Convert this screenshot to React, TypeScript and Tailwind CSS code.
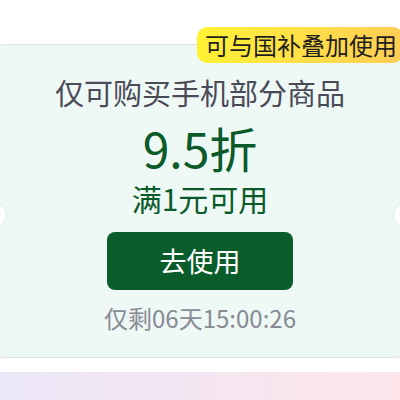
const font = { fontFamily: '"Noto Sans CJK SC", "Noto Sans", sans-serif' };

const App = () => {
  return (
    <div className="w-[400px] h-[400px] overflow-hidden bg-white relative" style={font}>
      <div className="pt-[44px]">
        <div className="relative -mx-[10px] w-[420px] rounded-[14px] border border-[#dde7e2] bg-[#eef8f4]">
          <div className="absolute -top-[18px] right-[6px] h-[36px] rounded-[10px] bg-gradient-to-r from-[#fff233] to-[#ffcd55] pl-[8px] pr-[6px] text-[24px] leading-[36px] text-[#1e1e1e]">
            可与国补叠加使用
          </div>
          <div className="absolute left-[-8px] top-[158px] h-[24px] w-[24px] rounded-full border border-[#e2e8e5] bg-white" />
          <div className="absolute right-[-8px] top-[158px] h-[24px] w-[24px] rounded-full border border-[#e2e8e5] bg-white" />
          <div className="flex flex-col items-center pt-[29px] pb-[23px]">
            <div className="text-[29px] leading-[36px] text-[#4a4a58]">仅可购买手机部分商品</div>
            <div className="mt-[9px] text-[48px] leading-[56px] text-[#0b5a2a]">9.5折</div>
            <div className="mt-[3px] text-[30px] leading-[40px] text-[#0b5a2a]">满1元可用</div>
            <button className="mt-[14px] h-[58px] w-[186px] rounded-[8px] bg-[#0a5c2a] text-[27px] text-white">
              去使用
            </button>
            <div className="mt-[12px] text-[24px] leading-[32px] text-[#888a94]">仅剩06天15:00:26</div>
          </div>
        </div>
      </div>
      <div className="mt-[14px] h-[40px] bg-gradient-to-r from-[#ebe7f8] to-[#fde5ea]" />
    </div>
  );
};

export default App;
